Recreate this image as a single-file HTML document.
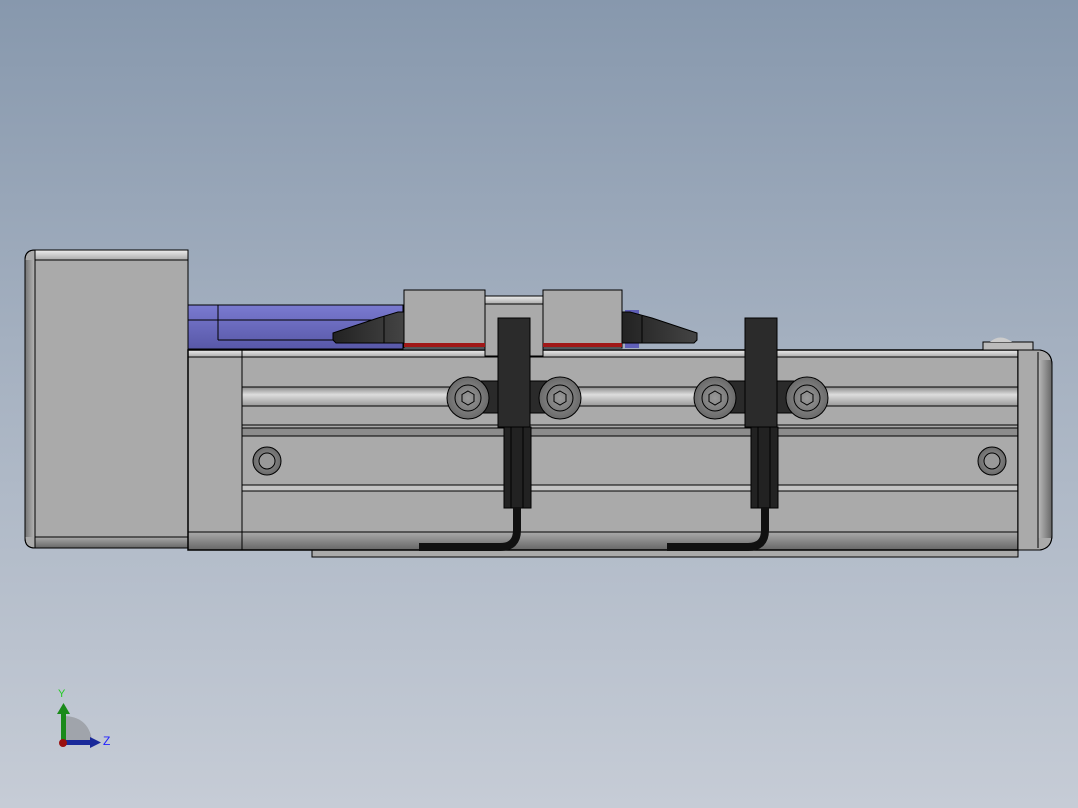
<!DOCTYPE html>
<html><head><meta charset="utf-8"><style>
html,body{margin:0;padding:0;width:1078px;height:808px;overflow:hidden}
body{background:linear-gradient(#8798ad,#a9b4c3 50%,#c6ccd6)}
svg{position:absolute;left:0;top:0}
</style></head><body>
<svg width="1078" height="808" viewBox="0 0 1078 808" xmlns="http://www.w3.org/2000/svg" font-family="Liberation Sans, sans-serif">
<defs>
<linearGradient id="tb" x1="0" y1="0" x2="0" y2="1"><stop offset="0" stop-color="#eee"/><stop offset="1" stop-color="#aaa"/></linearGradient>
<linearGradient id="bt" x1="0" y1="0" x2="0" y2="1"><stop offset="0" stop-color="#aaa"/><stop offset="1" stop-color="#666"/></linearGradient>
<linearGradient id="lr" x1="0" y1="0" x2="1" y2="0"><stop offset="0" stop-color="#777"/><stop offset="1" stop-color="#bbb"/></linearGradient>
<linearGradient id="rl" x1="0" y1="0" x2="1" y2="0"><stop offset="0" stop-color="#bbb"/><stop offset="1" stop-color="#666"/></linearGradient>
<linearGradient id="gr" x1="0" y1="0" x2="0" y2="1"><stop offset="0" stop-color="#888"/><stop offset=".4" stop-color="#ddd"/><stop offset="1" stop-color="#999"/></linearGradient>
<linearGradient id="bl" x1="0" y1="0" x2="0" y2="1"><stop offset="0" stop-color="#7a7ad0"/><stop offset="1" stop-color="#5858a8"/></linearGradient>
<linearGradient id="wd" x1="0" y1="0" x2="1" y2="0"><stop offset="0" stop-color="#222"/><stop offset="1" stop-color="#444"/></linearGradient>
<radialGradient id="bolt"><stop offset="0" stop-color="#999"/><stop offset="1" stop-color="#6a6a6a"/></radialGradient>
</defs>
<g stroke="#000" stroke-width="1">
<rect x="188" y="305" width="215" height="44" fill="url(#bl)"/>
<line x1="188" y1="320" x2="403" y2="320"/><line x1="218" y1="305" x2="218" y2="340"/><line x1="218" y1="340" x2="400" y2="340"/>
<rect x="625" y="310" width="14" height="38" fill="#6060b8" stroke="none"/>
<path d="M35 250 H188 V548 H35 Q25 548 25 538 V260 Q25 250 35 250Z" fill="#aaa"/>
<rect x="35" y="250" width="153" height="10" fill="url(#tb)"/>
<rect x="35" y="537" width="153" height="11" fill="url(#bt)"/>
<rect x="25.5" y="260" width="10" height="277" fill="url(#lr)" stroke="none"/>
<line x1="35" y1="250" x2="35" y2="548"/><line x1="35" y1="260" x2="188" y2="260"/><line x1="35" y1="537" x2="188" y2="537"/>
<path d="M35 250 H188 V548 H35 Q25 548 25 538 V260 Q25 250 35 250Z" fill="none"/>
<rect x="312" y="548" width="706" height="9" fill="#aaa"/>
<rect x="188" y="350" width="830" height="200" fill="#aaa"/>
<rect x="188" y="350" width="830" height="7" fill="url(#tb)"/>
<rect x="188" y="532" width="830" height="18" fill="url(#bt)"/>
<rect x="242" y="387" width="776" height="19" fill="url(#gr)"/>
<rect x="242" y="428" width="776" height="8" fill="#8c8c8c"/>
<rect x="242" y="485" width="776" height="6" fill="#c4c4c4"/>
<g>
<line x1="188" y1="357" x2="1018" y2="357"/><line x1="242" y1="387" x2="1018" y2="387"/><line x1="242" y1="406" x2="1018" y2="406"/>
<line x1="242" y1="425" x2="1018" y2="425"/><line x1="242" y1="428" x2="1018" y2="428"/><line x1="242" y1="436" x2="1018" y2="436"/>
<line x1="242" y1="485" x2="1018" y2="485"/><line x1="242" y1="491" x2="1018" y2="491"/><line x1="188" y1="532" x2="1018" y2="532"/>
<line x1="242" y1="350" x2="242" y2="550"/>
</g>
<rect x="188" y="350" width="830" height="200" fill="none" stroke-width="1.5"/>
<path d="M1018 350 H1040 Q1052 352 1052 365 V535 Q1052 548 1040 550 H1018Z" fill="#aaa"/>
<rect x="1038" y="360" width="14" height="178" fill="url(#rl)" stroke="none"/>
<line x1="1038" y1="352" x2="1038" y2="548"/>
<path d="M1018 350 H1040 Q1052 352 1052 365 V535 Q1052 548 1040 550 H1018Z" fill="none"/>
<rect x="983" y="342" width="50" height="8" fill="#bbb"/>
<path d="M990 342 Q1000 333 1012 342Z" fill="#ccc" stroke="none"/>
<rect x="485" y="296" width="58" height="60" fill="#aaa"/>
<rect x="485" y="296" width="58" height="8" fill="url(#tb)"/>
<rect x="404" y="290" width="81" height="58" fill="#aaa"/>
<rect x="543" y="290" width="79" height="58" fill="#aaa"/>
<rect x="404" y="343" width="81" height="4" fill="#a01818" stroke="none"/>
<rect x="543" y="343" width="79" height="4" fill="#a01818" stroke="none"/>
<path d="M333 333 L378 318 L398 312 L404 312 L404 343 L336 343 L333 340Z" fill="url(#wd)"/>
<line x1="384" y1="316" x2="384" y2="343"/>
<path d="M697 333 L652 318 L630 312 L622 312 L622 343 L694 343 L697 340Z" fill="url(#wd)"/>
<line x1="642" y1="316" x2="642" y2="343"/>
<g fill="url(#bolt)">
<rect x="470" y="381" width="90" height="32" fill="#2a2a2a"/>
<rect x="714" y="381" width="92" height="32" fill="#2a2a2a"/>
<circle cx="468" cy="398" r="21"/><circle cx="560" cy="398" r="21"/><circle cx="715" cy="398" r="21"/><circle cx="807" cy="398" r="21"/>
</g>
<g fill="none">
<circle cx="468" cy="398" r="13"/><circle cx="560" cy="398" r="13"/><circle cx="715" cy="398" r="13"/><circle cx="807" cy="398" r="13"/>
<path d="M468 391 l6 3.5 v7 l-6 3.5 l-6 -3.5 v-7Z"/><path d="M560 391 l6 3.5 v7 l-6 3.5 l-6 -3.5 v-7Z"/>
<path d="M715 391 l6 3.5 v7 l-6 3.5 l-6 -3.5 v-7Z"/><path d="M807 391 l6 3.5 v7 l-6 3.5 l-6 -3.5 v-7Z"/>
</g>
<circle cx="267" cy="461" r="14" fill="url(#bolt)"/><circle cx="267" cy="461" r="8" fill="#999"/>
<circle cx="992" cy="461" r="14" fill="url(#bolt)"/><circle cx="992" cy="461" r="8" fill="#999"/>
<rect x="498" y="318" width="32" height="109" fill="#2b2b2b"/>
<rect x="504" y="427" width="27" height="81" fill="#222"/>
<line x1="511" y1="427" x2="511" y2="508"/><line x1="523" y1="427" x2="523" y2="508"/>
<path d="M517 508 V530 Q517 547 500 547 H419" fill="none" stroke="#111" stroke-width="8"/>
<rect x="745" y="318" width="32" height="109" fill="#2b2b2b"/>
<rect x="751" y="427" width="27" height="81" fill="#222"/>
<line x1="758" y1="427" x2="758" y2="508"/><line x1="770" y1="427" x2="770" y2="508"/>
<path d="M765 508 V530 Q765 547 748 547 H667" fill="none" stroke="#111" stroke-width="8"/>
</g>
<path d="M63 740 V716 Q88 716 92 740Z" fill="#a0a4ab"/>
<rect x="61" y="712" width="5" height="28" fill="#1a8a1a"/><path d="M57 714 L63.5 703 L70 714Z" fill="#1a8a1a"/>
<rect x="63" y="740" width="28" height="5" fill="#1a2a9a"/><path d="M90 737 L101 742.5 L90 748Z" fill="#1a2a9a"/>
<circle cx="63" cy="743" r="4" fill="#9a1010"/>
<text x="58" y="697" font-size="11" fill="#2c2">Y</text>
<text x="103" y="745" font-size="12" fill="#22f">Z</text>
</svg>
</body></html>
